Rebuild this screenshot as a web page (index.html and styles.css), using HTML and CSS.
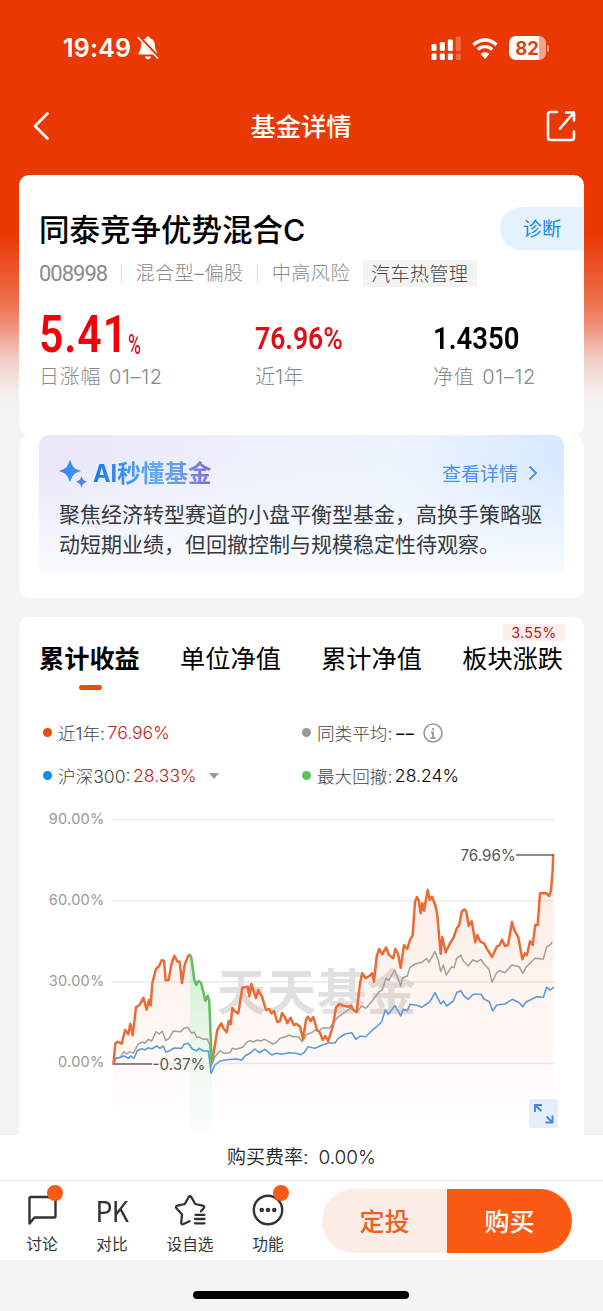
FILE: index.html
```html
<!DOCTYPE html>
<html lang="zh-CN">
<head>
  <meta charset="UTF-8" />
  <meta name="viewport" content="width=device-width, initial-scale=1.0">
  <title>基金详情</title>
  <link rel="stylesheet" href="styles.css">
</head>
<body>
  <!-- 状态栏 -->
  <div class="status-bar">
    <span class="time">19:49</span>
    <svg class="bell" width="22" height="26" viewBox="0 0 22 26">
      <path d="M3 19.500C1 19.500 1.400 18 2.600 16.500C4 15 3.700 12 4.100 9C4.700 5.500 6.700 4 9 3.300C9.300 1 12.700 1 13 3.300C16.300 4.300 17.700 7 17.900 10C18.100 13.500 18.400 15 19.400 16.500C20.500 18 20.500 19.500 19 19.500Z" fill="#fff"/>
      <path d="M8 21.500H14C13.500 25 8.500 25 8 21.500Z" fill="#fff"/>
      <path d="M0.500 0.500L21.500 22.500" stroke="#ea3802" stroke-width="3.400"/>
      <path d="M1 2.500L20.500 23" stroke="#fff" stroke-width="1.700" stroke-linecap="round"/>
    </svg>
    <div class="status-right">
      <svg width="30" height="24" viewBox="0 0 30 24" fill="#fff">
        <rect x="0.500" y="8" width="5" height="7" rx="1.300"/>
        <rect x="8.800" y="6" width="5" height="9" rx="1.300"/>
        <rect x="16.800" y="3.500" width="5" height="11.500" rx="1.300"/>
        <rect x="24.800" y="0.500" width="5" height="14.500" rx="1.300" opacity=".25"/>
        <rect x="0.500" y="17.500" width="5" height="6.500" rx="1.300"/>
        <rect x="8.800" y="17.500" width="5" height="6.500" rx="1.300"/>
        <rect x="16.800" y="17.500" width="5" height="6.500" rx="1.300"/>
        <rect x="24.800" y="17.500" width="5" height="6.500" rx="1.300" opacity=".25"/>
      </svg>
      <svg class="wifi" width="26" height="22" viewBox="0 0 26 22" fill="none" stroke="#fff" stroke-width="3.400">
        <path d="M1.500 8C8 1.300 18 1.300 24.500 8"/>
        <path d="M5.800 12.500C10 8.700 16 8.700 20.200 12.500"/>
        <path d="M13 22L8.600 17C11 14.700 15 14.700 17.400 17Z" fill="#fff" stroke="none"/>
      </svg>
      <div class="battery"><span>82</span></div>
      <i class="battery-cap"></i>
    </div>
  </div>

  <!-- 导航栏 -->
  <div class="nav-bar">
    <svg width="17" height="30" viewBox="0 0 17 30" fill="none" stroke="#fff" stroke-width="2.600" stroke-linecap="round" stroke-linejoin="round">
      <path d="M14.500 2.500L2 15L14.500 27.500"/>
    </svg>
    <h1>基金详情</h1>
    <svg width="30" height="32" viewBox="0 0 30 32" fill="none" stroke="#fff" stroke-width="2.600" stroke-linecap="round" stroke-linejoin="round">
      <path d="M11 2H4.500Q2 2 2 4.500V27Q2 30 4.500 30H25.500Q28 30 28 27V21.500"/>
      <path d="M14 18.500L27.500 3M20 2.500H28V10.500"/>
    </svg>
  </div>

  <!-- 基金概要 -->
  <div class="card summary">
    <div class="name-row">
      <h2>同泰竞争优势混合C</h2>
      <a class="diagnose">诊断</a>
    </div>
    <div class="meta">
      <span class="code">008998</span>
      <i class="split"></i>
      <span>混合型–偏股</span>
      <i class="split"></i>
      <span>中高风险</span>
      <span class="sector">汽车热管理</span>
    </div>
    <div class="stats">
      <div class="stat day">
        <div class="value"><b class="big">5.41</b><span class="unit">%</span></div>
        <div class="label">日涨幅 01–12</div>
      </div>
      <div class="stat year">
        <div class="value"><b class="num red">76.96<span>%</span></b></div>
        <div class="label">近1年</div>
      </div>
      <div class="stat">
        <div class="value"><b class="num">1.4350</b></div>
        <div class="label">净值 01–12</div>
      </div>
    </div>
  </div>

  <!-- AI 解读 -->
  <div class="card ai-card">
    <div class="ai-box">
      <div class="ai-head">
        <svg width="30" height="30" viewBox="0 0 30 30">
          <defs>
            <linearGradient id="spark" x1="0" y1="0" x2="1" y2="0.600">
              <stop offset="0" stop-color="#2385fb"/>
              <stop offset="1" stop-color="#4c94f0"/>
            </linearGradient>
          </defs>
          <path d="M11 1.500C13.500 9 14.500 10.500 22 13C14.500 15.500 13.500 17 11 24.500C8.500 17 7.500 15.500 0 13C7.500 10.500 8.500 9 11 1.500Z" fill="url(#spark)"/>
          <path d="M22.500 18C23.900 22 24.300 22.400 28 23.800C24.300 25.200 23.900 25.600 22.500 29.500C21.100 25.600 20.700 25.200 17 23.800C20.700 22.400 21.100 22 22.500 18Z" fill="#4187ea"/>
        </svg>
        <h3>AI秒懂基金</h3>
        <a class="more">查看详情</a>
        <svg class="arrow" width="10" height="16" viewBox="0 0 10 16" fill="none" stroke="#4b92e6" stroke-width="2">
          <path d="M1.500 1.500L8 8L1.500 14.500"/>
        </svg>
      </div>
      <p>聚焦经济转型赛道的小盘平衡型基金，高换手策略驱动短期业绩，但回撤控制与规模稳定性待观察。</p>
    </div>
  </div>

  <!-- 业绩走势 -->
  <div class="card trend">
    <div class="tabs">
      <div class="tab active">累计收益</div>
      <div class="tab">单位净值</div>
      <div class="tab">累计净值</div>
      <div class="tab">板块涨跌<span class="tag">3.55%</span></div>
    </div>
    <div class="legend">
      <div class="item"><i class="dot orange"></i>近1年:<em class="up">76.96%</em></div>
      <div class="item"><i class="dot gray"></i>同类平均:<em class="none">––</em>
        <svg class="info" width="20" height="20" viewBox="0 0 20 20" fill="none" stroke="#999">
          <circle cx="10" cy="10" r="9" stroke-width="1.600"/>
          <path d="M10 5V7.300M8 9.500H10V15M7.500 15H12.500" stroke-width="1.800"/>
        </svg>
      </div>
      <div class="item"><i class="dot blue"></i>沪深300:<em class="up">28.33%</em><i class="caret"></i></div>
      <div class="item"><i class="dot green"></i>最大回撤:<em>28.24%</em></div>
    </div>
    <svg class="chart" width="565" height="334" viewBox="19 800 565 334">
      <defs>
        <linearGradient id="fillRed" gradientUnits="userSpaceOnUse" x1="0" y1="855" x2="0" y2="1134">
          <stop offset="0" stop-color="#f0703c" stop-opacity=".14"/>
          <stop offset=".6" stop-color="#f0703c" stop-opacity=".06"/>
          <stop offset="1" stop-color="#f0703c" stop-opacity="0"/>
        </linearGradient>
        <linearGradient id="fillGreen" gradientUnits="userSpaceOnUse" x1="0" y1="955" x2="0" y2="1134">
          <stop offset="0" stop-color="#5fca66" stop-opacity=".3"/>
          <stop offset=".55" stop-color="#5fca66" stop-opacity=".12"/>
          <stop offset="1" stop-color="#5fca66" stop-opacity=".02"/>
        </linearGradient>
      </defs>
      <g stroke="#ececec" stroke-width="1.600">
        <path d="M112 819.500H554" stroke-width="1"/>
        <path d="M112 900.700H554"/>
        <path d="M112 981.900H554"/>
        <path d="M112 1063.500H554"/>
      </g>
      <g class="axis" text-anchor="end">
        <text x="104.500" y="824">90.00%</text>
        <text x="104.500" y="905">60.00%</text>
        <text x="104.500" y="986">30.00%</text>
        <text x="104.500" y="1067">0.00%</text>
      </g>
      <text class="watermark" x="217" y="1010" textLength="199">天天基金</text>

      <!-- 区域填充 -->
      <path fill="url(#fillRed)" d="M113.500 1134V1064L115.300 1043.500L121.700 1043.700L125 1030L132.700 1035L136 1007.300L143.300 997.700L150.700 1005.300L156 969L164 960.700L165.700 980.300L174.300 955.700L182 983L189.700 954.700V1134Z"/>
      <path fill="url(#fillGreen)" d="M189.700 1134V954.700L193 970L196.300 985L201 982.700L205.300 1001L209.300 1001.700L212 1061V1134Z"/>
      <path fill="url(#fillRed)" d="M212.300 1134V1061.300L217.300 1030L226.700 1032.300L232.300 1008.300L238.300 1013.300L242.300 987.700L251.300 984L262 996.700L271.300 1013.300L277.300 1022L282 1013L293.700 1025L300 1026.700L303 1039L307.700 1016.700L313.300 1017L322.700 1040L328.300 1041L336 1007.700L339.300 1004L356.700 1012L362.300 973.300L374 981.700L379 949L393.300 958.300L400.700 967.700L404 945.300L412.700 935L417 897L424 910.700L427.700 890L435.300 905L440.700 954L453.300 938.300L464.300 909.300L475.300 942.300L492 957L502 939.700L508 945L512 922L522.300 959.300L532.700 945L540 893.300L549.300 896L553.500 855V1134Z"/>

      <!-- 同类平均 -->
      <polyline class="line avg" points="113.500,1064 115,1058.300 120,1057.700 124,1051.700 126.700,1054 130,1051.700 133.300,1053.300 138.300,1044 142.700,1042 145,1043.300 148.300,1039.300 151.700,1041 156,1031.700 159.300,1034 162.300,1031 165.700,1040.700 169,1038.300 173.300,1031 180.700,1031.700 184,1028.300 187.700,1027.300 191.700,1033.300 194.300,1032.300 196.700,1037.300 200,1037.300 203.300,1039.300 207.300,1039 209.700,1045 211,1066.700 215,1056.700 220,1050.700 224,1053.300 230,1052.700 232.300,1048.300 236,1049.300 242.700,1047.300 246.700,1042.300 250,1040.700 253.300,1042 257.300,1040 260.700,1041 264.700,1039.300 269,1041.700 272.700,1044 276,1042.700 280,1038.300 284,1037.300 289.300,1035 293.300,1036.700 298.300,1036.700 302.300,1041.700 306.700,1034.300 311.700,1032.700 315,1030 319,1031 322.700,1027.700 329.300,1028.300 333.300,1022.700 337.300,1017.700 343.300,1013.300 350,1008.300 356.700,1011.700 361.700,1006 366,1008.300 370.700,1002.700 376,996 379.300,991.700 382.300,990 386,978.300 388.700,980.700 394.700,970 399.300,981.700 400.700,986 402.700,977.700 407.300,976 410,967.300 415,964 421.700,962.300 426.700,958.300 429,962.300 435,951.700 438.300,960 440.700,971.700 443.300,965 446.300,975 451.700,966.700 454,967.700 456.700,958.300 460.700,955 463.300,961 468.300,966 472.700,960 477.300,961.700 481,959.300 484,964 489,969.300 492,982.300 496.700,972.700 500,970.700 505,972.700 511.700,965 519.300,966.700 522.700,973.300 526,967.300 530,963.300 535,958.300 543.300,959 546.700,946.700 550,945 552,942.300"/>
      <!-- 沪深300 -->
      <polyline class="line index" points="113.500,1064 116,1058.300 120.700,1057.300 124.300,1056 128.300,1058.300 130.700,1056 134,1058.300 137.300,1050.700 141.700,1048.700 145,1050 148.300,1047.700 151.700,1049 156.700,1046 160,1048.300 163.300,1046 165.700,1052 170,1050.700 174,1048 181.700,1048.300 184,1044.300 188.300,1043.300 192.300,1049 196.700,1050.700 199.300,1048.300 203.300,1051 208.300,1051 210,1063.300 211,1073.300 215,1065 220,1061 226.700,1059.700 236.700,1059 241.700,1060 245,1056 250,1053.300 254.700,1049 259.300,1052.700 265,1049.300 271.700,1055 276.700,1053.300 281.700,1054.300 288.300,1052.700 296,1053.300 301,1054.700 304,1052.700 308,1046.700 315,1048.300 321.700,1045.300 328.300,1043 335,1043 338.300,1038.300 345,1034 351.700,1032.700 356,1039.300 360,1036 365.700,1036.700 371.700,1030.700 376.700,1026.700 381.700,1021.700 385.300,1010 388.300,1014.300 395,1005.700 399.300,1013.300 400.700,1016 403.300,1009.300 407.300,1010.700 410,1004.300 416.700,1005.300 421.700,1007.300 426.700,1004 430,1001.700 435,992.700 440.700,1004 443.300,1001 446.700,1006 453.300,1001 456.700,992.700 460.700,990.700 464,996 468.300,999.300 473.300,994.300 481,994.300 484,999 489.300,1001.700 492.700,1011 496.700,1005 505,1004 512.300,999.300 519.300,1002.700 522.700,1006.700 526,1002 531.700,999.300 536.700,996.700 543.300,997.300 546.700,987.300 550.300,990 553.500,987.300"/>
      <!-- 本基金 -->
      <polyline class="line fund" points="113.500,1064 115.300,1043.500 117.700,1041.700 121.700,1043.700 125,1030 128.300,1034.300 130.300,1023.700 132.700,1035.300 136,1007.300 140,1004.500 143.300,997.700 146.700,1009.700 149,1000 150.700,1005.300 152.300,983.300 156,969 159,966.300 161.700,960.300 164,960.700 165.700,980.300 168.700,980 171.300,965 174.300,955.700 177.300,961.300 179.700,962 182,983 184.700,964.700 188.300,955.700 189.700,954.700"/>
      <polyline class="line fund" points="212.300,1061.300 217.300,1030 221.300,1023.300 223.700,1028.700 226.700,1032.300 228.700,1021 230.700,1024.300 232.300,1008.300 235.300,1011.700 238.300,1013.300 242.300,987.700 247.700,986.700 249.300,996.300 251.300,984 256,998 258.300,990 262,996.700 266,1010 269.300,1009 271.300,1013.300 274,1011 277.300,1022 280,1021 282,1013 285,1017.300 287.300,1023 290.700,1017.700 293.700,1025 296.700,1024 300,1026.700 303,1039 306,1020 307.700,1016.700 310.700,1021 313.300,1017 317.300,1030.700 319.700,1032 322.700,1040 325.300,1036 328.300,1041 332.700,1026.700 336,1007.700 339.300,1004 343.300,1005.700 348.300,1006.700 351.300,1005.700 353.300,1010 356.700,1012 360,983.300 362.300,973.300 365.700,978.300 369.300,976 372.300,973.300 374,981.700 376.700,956.700 379,949 382.300,954.300 386,947.300 389,955 393.300,958.300 395.300,948.700 398,954 400.700,967.700 404,945.300 407.300,949 410,940 412.700,935 415,901.700 417,897 418.700,900 420.700,913.300 422.300,903.300 424,910.700 427.700,890 429.700,900 432,896.700 435.300,905 437.300,915 440.700,954 442.300,937 445.700,952.300 450,943.300 453.300,938.300 456.700,928.300 459.300,925 461.700,911.700 464.300,909.300 466.300,911.300 468.700,925.700 471.700,921.300 475.300,942.300 477.300,935 480,941.300 484,943.300 486.700,948.300 492,957 496.700,946.700 499.300,945.700 502,939.700 505,946 508,945 512,922 514,929.300 518.300,937.300 522.300,959.300 525,953.300 527,955 530,941.300 532.700,945 535.300,925 537.700,925 540,893.300 546.300,893.300 549.300,896 551,890 552.700,870 553.200,855"/>
      <!-- 最大回撤区间 -->
      <polyline class="line down" points="189.700,954.700 191.300,957.300 193,970 194.300,980 196.300,985 198.300,981 201,982.700 203.300,991.700 205.300,1001 207.700,995.700 209.300,1001.700 210.300,1026.700 211.700,1061.700"/>

      <path d="M114 1064H152M516 855H553.500" stroke="#666" stroke-width="1.700"/>
      <text class="mark" x="152.500" y="1070">-0.37%</text>
      <text class="mark" x="460.500" y="861">76.96%</text>

      <rect x="529" y="1099" width="29" height="29" rx="2.500" fill="#e5effb"/>
      <path d="M535 1112V1105H542M535.500 1105.500L541.500 1111M545.500 1122.500H552.500V1115.500M552 1122L546.500 1116.500" fill="none" stroke="#4285dc" stroke-width="1.900"/>
    </svg>
  </div>

  <!-- 底部操作 -->
  <div class="footer">
    <div class="fee">购买费率:<span>0.00%</span></div>
    <div class="actions">
      <div class="action w1">
        <svg width="32" height="32" viewBox="0 0 32 32" fill="none" stroke="#333" stroke-width="2.400" stroke-linejoin="round">
          <path d="M3.500 29.500V4.500Q3.500 3 5 3H28Q29.500 3 29.500 4.500V22Q29.500 23.500 28 23.500H8.500Z"/>
        </svg>
        <span>讨论</span>
        <i class="badge"></i>
      </div>
      <div class="action w2">
        <div class="pk">PK</div>
        <span>对比</span>
      </div>
      <div class="action w3">
        <svg width="34" height="32" viewBox="0 0 34 32" fill="none" stroke="#333" stroke-width="2.300" stroke-linejoin="round" stroke-linecap="round">
          <path d="M16.500 27.300L10.500 30Q8 31 8.300 28L9 20.300L3.600 14.500Q2 12.200 4.500 11.600L11.800 10L15.600 3.200Q17 1.300 18.400 3.200L22.200 10L29.500 11.600Q32.400 12.300 30.500 14.500L28 17.300"/>
          <path d="M22.500 20.800H31.500M22 25H31.500M22 29.300H31.500" stroke-width="2.300"/>
        </svg>
        <span>设自选</span>
      </div>
      <div class="action w4">
        <svg width="32" height="32" viewBox="0 0 32 32">
          <circle cx="16" cy="16" r="14.200" fill="none" stroke="#333" stroke-width="2.400"/>
          <g fill="#333"><circle cx="9.700" cy="16" r="2.300"/><circle cx="16" cy="16" r="2.300"/><circle cx="22.300" cy="16" r="2.300"/></g>
        </svg>
        <span>功能</span>
        <i class="badge"></i>
      </div>
      <div class="buttons">
        <button class="plan">定投</button>
        <button class="buy">购买</button>
      </div>
    </div>
  </div>
  <div class="home-bar"><i></i></div>
</body>
</html>
```

FILE: styles.css
```css
* {
  box-sizing: border-box;
}
body {
  margin: 0;
  width: 603px;
  height: 1311px;
  overflow: hidden;
  font-family: Inter, "Noto Sans CJK SC", sans-serif;
  background: #f4f4f4 linear-gradient(#ea3802 0, #ea3802 235px, #ed6f4b 300px, #f0907a 325px, #f2cfc6 360px, #f4f0ef 395px, #f4f4f4 420px) no-repeat;
  color: #000;
}
h1, h2, h3, p {
  margin: 0;
}
i, em {
  font-style: normal;
}
svg {
  display: block;
  flex: none;
}

/* 状态栏 */
.status-bar {
  height: 96px;
  padding: 0 54px 0 63px;
  display: flex;
  align-items: center;
  color: #fff;
}
.time {
  width: 74px;
  font-size: 25px;
  font-weight: 600;
  letter-spacing: .2px;
  white-space: nowrap;
}
.status-right {
  margin-left: auto;
  display: flex;
  align-items: center;
}
.wifi {
  margin: 0 11px;
}
.battery {
  width: 37px;
  height: 24px;
  border-radius: 7px;
  background: linear-gradient(90deg, #fff 82%, #f5a68c 82%);
  color: #d9430f;
  font-size: 18.500px;
  font-weight: 700;
  line-height: 25px;
  text-align: center;
  padding-right: 1px;
}
.battery-cap {
  width: 2px;
  height: 7px;
  margin-left: 1px;
  border-radius: 0 2px 2px 0;
  background: #f5a68c;
}

.nav-bar {
  height: 79px;
  padding: 0 27px 19px 33px;
  display: flex;
  align-items: center;
  justify-content: space-between;
  color: #fff;
}
.nav-bar h1 {
  padding: 2px 0 0 6px;
  font-size: 25.300px;
  font-weight: 500;
  line-height: 36px;
}

.card {
  margin: 0 19px;
  background: #fff;
  border-radius: 10px;
}

/* 基金概要 */
.summary {
  height: 260px;
  padding: 32px 0 0 20px;
}
.name-row {
  height: 43px;
  display: flex;
  justify-content: space-between;
  align-items: center;
}
.name-row h2 {
  padding-top: 2px;
  font-size: 30.500px;
  font-weight: 500;
  line-height: 43px;
}
.diagnose {
  width: 84px;
  height: 43px;
  border-radius: 22px 0 0 22px;
  background: #e4f2fd;
  color: #1489ea;
  font-size: 19.300px;
  line-height: 44px;
  text-align: center;
}
.meta {
  height: 27px;
  margin-top: 10px;
  display: flex;
  align-items: center;
  font-size: 19.200px;
  font-weight: 300;
  line-height: 29px;
  color: #8a8a8a;
  white-space: nowrap;
}
.meta span {
  letter-spacing: .4px;
}
.meta .code {
  width: 68px;
  font-family: Roboto, sans-serif;
  font-size: 22px;
  font-weight: 400;
  letter-spacing: -1px;
}
.split {
  width: 1px;
  height: 19px;
  margin: 0 13.700px;
  background: #ddd;
}
.meta .sector {
  width: 114px;
  height: 27px;
  margin-left: 12.500px;
  background: #f4f4f4;
  color: #444;
  text-align: center;
  letter-spacing: .2px;
}
.stats {
  display: flex;
  margin-top: 22px;
}
.stat {
  white-space: nowrap;
}
.day {
  width: 216px;
}
.year {
  width: 178px;
}
.value {
  height: 53px;
  display: flex;
  font-family: Roboto, sans-serif;
}
.big {
  width: 89px;
  font-size: 51px;
  font-weight: 600;
  line-height: 51px;
  letter-spacing: 1px;
  color: #f00008;
  transform: scaleX(.84);
  transform-origin: 0 0;
}
.unit {
  font-size: 27px;
  font-weight: 500;
  line-height: 72px;
  color: #d8141a;
  transform: scaleX(.65);
  transform-origin: 0 0;
}
.num {
  font-size: 32px;
  font-weight: 600;
  line-height: 58px;
  transform: scaleX(.86);
  transform-origin: 0 0;
}
.num span {
  font-weight: 500;
}
.red {
  color: #dc1016;
  transform: scaleX(.83);
}
.label {
  font-size: 20px;
  font-weight: 300;
  line-height: 30px;
  letter-spacing: .7px;
  word-spacing: 1.500px;
  color: #888;
}
.year .label {
  letter-spacing: .2px;
}

/* AI 解读 */
.ai-card {
  height: 163px;
  padding: 0 20px;
}
.ai-box {
  height: 143px;
  padding: 22px 20px 0;
  border-radius: 10px;
  background: linear-gradient(rgba(255, 255, 255, 0) 20%, rgba(249, 252, 255, .95) 95%, #fff),
    linear-gradient(100deg, #e9e6f8 0%, #edf0fc 35%, #edf4fe 65%, #d6e7ff 100%);
}
.ai-head {
  height: 31px;
  display: flex;
  align-items: center;
}
.ai-head h3 {
  margin-left: 4px;
  padding-top: 1px;
  font-size: 23.600px;
  font-weight: 700;
  line-height: 31px;
  background: linear-gradient(90deg, #1678ef, #60a9f2 50%, #6b9cec 72%, #8268d8);
  background-clip: text;
  -webkit-background-clip: text;
  color: transparent;
}
.more {
  margin-left: auto;
  font-size: 19px;
  color: #4b92e6;
}
.arrow {
  margin: 0 6px 0 10px;
}
.ai-box p {
  margin-top: 12px;
  font-size: 21px;
  font-weight: 400;
  line-height: 30px;
  color: #36393f;
}

/* 走势卡片 */
.trend {
  height: 518px;
  margin-top: 19px;
  border-radius: 10px 10px 0 0;
  overflow: hidden;
}
.tabs {
  height: 73px;
  padding: 24px 21px 0 20px;
  display: flex;
  justify-content: space-between;
}
.tab {
  position: relative;
  height: 49px;
  font-size: 25.200px;
  line-height: 37px;
  white-space: nowrap;
}
.active {
  font-weight: 700;
}
.active::after {
  content: "";
  position: absolute;
  left: 40px;
  bottom: 0;
  width: 23px;
  height: 5px;
  border-radius: 3px;
  background: #ed4a0c;
}
.tag {
  position: absolute;
  top: -17px;
  right: -2px;
  width: 62px;
  height: 17px;
  border-radius: 2px;
  background: #fdeeee;
  color: #c41a20;
  font-size: 14.300px;
  line-height: 18px;
  text-align: center;
  letter-spacing: .3px;
}
.legend {
  height: 110px;
  padding: 21px 0 3px 24px;
  display: grid;
  grid-template-columns: 259px 1fr;
}
.item {
  display: flex;
  align-items: center;
  font-size: 17.600px;
  font-weight: 300;
  color: #444;
  white-space: nowrap;
}
.item em {
  margin-left: 2.500px;
  color: #000;
  font-size: 17.600px;
  font-weight: 350;
}
.item .up {
  color: #c41a20;
}
.item .none {
  width: 22px;
  margin-left: 4px;
  font-size: 16px;
  font-weight: 500;
  letter-spacing: 1.500px;
}
.dot {
  width: 9px;
  height: 9px;
  margin-right: 6px;
  border-radius: 50%;
}
.orange {
  background: #f04c0e;
}
.gray {
  background: #999;
}
.blue {
  background: #1089f2;
}
.green {
  background: #5ac35a;
}
.caret {
  margin-left: 12px;
  border: 5px solid transparent;
  border-top: 6px solid #999;
  border-bottom: 0;
}
.info {
  margin-left: 5px;
}
.chart text {
  font-family: Inter, sans-serif;
}
.axis text {
  font-size: 14.600px;
  letter-spacing: .2px;
  fill: #999;
}
.chart .mark {
  font-size: 15.200px;
  fill: #555;
}
.chart .watermark {
  font-family: "Noto Sans CJK SC", sans-serif;
  font-size: 49px;
  font-weight: 700;
  fill: #e0e0e0;
}
.line {
  fill: none;
  stroke-linejoin: round;
  stroke-linecap: round;
}
.avg {
  stroke: #a59f9c;
  stroke-width: 1.500;
}
.index {
  stroke: #5b9bdc;
  stroke-width: 1.600;
}
.fund {
  stroke: #ec6a35;
  stroke-width: 2.500;
}
.down {
  stroke: #62bd58;
  stroke-width: 2.500;
}

/* 底部操作 */
.footer {
  height: 125px;
  background: #fff;
}
.fee {
  height: 46px;
  border-bottom: 1px solid #e9e9e9;
  font-size: 19px;
  font-weight: 350;
  line-height: 46px;
  text-align: center;
  color: #222;
}
.fee span {
  margin-left: 10px;
}
.actions {
  height: 79px;
  padding: 8px 31px 0 4px;
  display: flex;
}
.action {
  position: relative;
  display: flex;
  flex-direction: column;
  align-items: center;
  padding-top: 5px;
  font-size: 15.700px;
  line-height: 22px;
  color: #333;
}
.action span {
  margin-top: 8px;
}
.w1 {
  width: 76px;
}
.w2 {
  width: 64px;
}
.w3 {
  width: 92px;
}
.w4 {
  width: 64px;
}
.pk {
  height: 32px;
  font-family: "Noto Sans CJK SC", sans-serif;
  font-size: 29px;
  line-height: 30px;
  letter-spacing: -.5px;
  transform: scaleX(.92);
}
.badge {
  position: absolute;
  top: -4px;
  left: 50%;
  margin-left: 5px;
  width: 16px;
  height: 16px;
  border-radius: 50%;
  background: #fa5a14;
}
.buttons {
  display: flex;
  margin-left: auto;
  width: 250px;
  height: 64px;
  border-radius: 32px;
  overflow: hidden;
}
button {
  flex: 1;
  border: 0;
  padding: 0 0 3px;
  font-family: "Noto Sans CJK SC", sans-serif;
  font-size: 25px;
  font-weight: 500;
}
.plan {
  background: #fcece6;
  color: #e9621f;
}
.buy {
  background: #fb5a14;
  color: #fff;
}
.home-bar {
  height: 51px;
  padding: 31px 0 0 193px;
}
.home-bar i {
  display: block;
  width: 216px;
  height: 8px;
  border-radius: 4px;
  background: #000;
}
```
